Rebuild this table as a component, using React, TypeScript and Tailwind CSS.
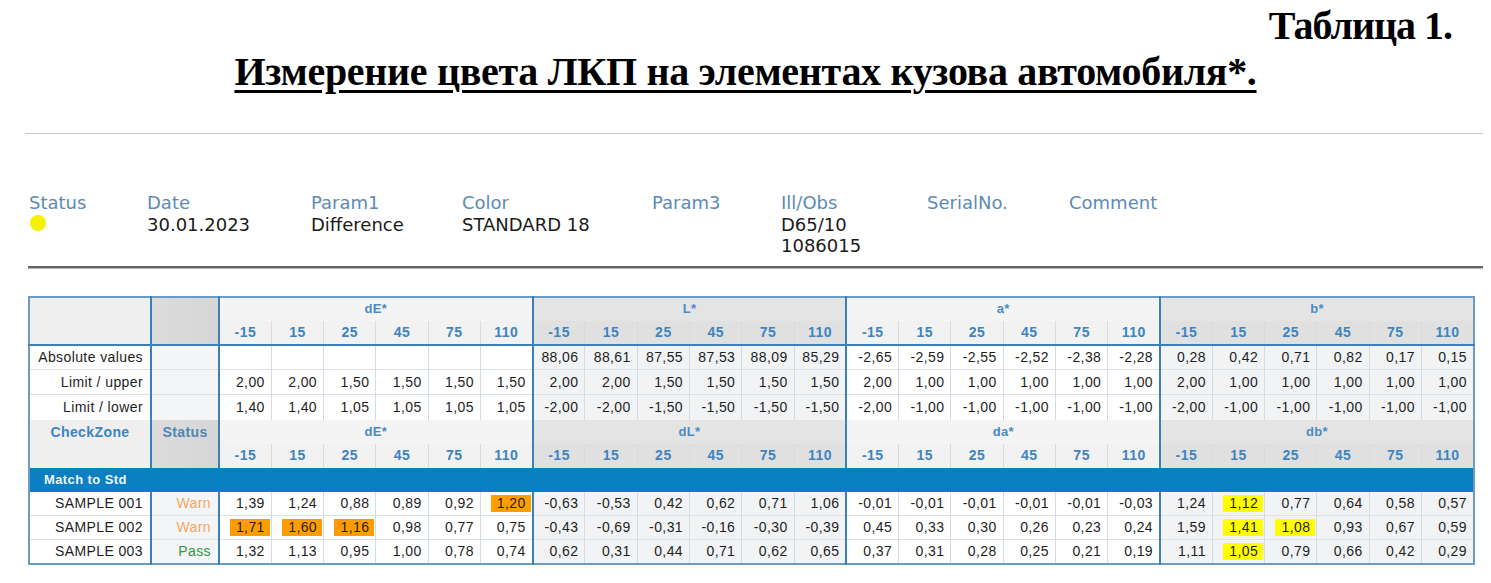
const angles = ["-15", "15", "25", "45", "75", "110"];

const groups = [
  { name: "dE*", diff: "dE*", shade: false },
  { name: "L*", diff: "dL*", shade: true },
  { name: "a*", diff: "da*", shade: false },
  { name: "b*", diff: "db*", shade: true },
];

const refRows: { label: string; values: string[] }[] = [
  {
    label: "Absolute values",
    values: [
      "", "", "", "", "", "",
      "88,06", "88,61", "87,55", "87,53", "88,09", "85,29",
      "-2,65", "-2,59", "-2,55", "-2,52", "-2,38", "-2,28",
      "0,28", "0,42", "0,71", "0,82", "0,17", "0,15",
    ],
  },
  {
    label: "Limit / upper",
    values: [
      "2,00", "2,00", "1,50", "1,50", "1,50", "1,50",
      "2,00", "2,00", "1,50", "1,50", "1,50", "1,50",
      "2,00", "1,00", "1,00", "1,00", "1,00", "1,00",
      "2,00", "1,00", "1,00", "1,00", "1,00", "1,00",
    ],
  },
  {
    label: "Limit / lower",
    values: [
      "1,40", "1,40", "1,05", "1,05", "1,05", "1,05",
      "-2,00", "-2,00", "-1,50", "-1,50", "-1,50", "-1,50",
      "-2,00", "-1,00", "-1,00", "-1,00", "-1,00", "-1,00",
      "-2,00", "-1,00", "-1,00", "-1,00", "-1,00", "-1,00",
    ],
  },
];

// "o:" = orange warning, "y:" = yellow warning
const samples: { name: string; status: string; values: string[] }[] = [
  {
    name: "SAMPLE 001",
    status: "Warn",
    values: [
      "1,39", "1,24", "0,88", "0,89", "0,92", "o:1,20",
      "-0,63", "-0,53", "0,42", "0,62", "0,71", "1,06",
      "-0,01", "-0,01", "-0,01", "-0,01", "-0,01", "-0,03",
      "1,24", "y:1,12", "0,77", "0,64", "0,58", "0,57",
    ],
  },
  {
    name: "SAMPLE 002",
    status: "Warn",
    values: [
      "o:1,71", "o:1,60", "o:1,16", "0,98", "0,77", "0,75",
      "-0,43", "-0,69", "-0,31", "-0,16", "-0,30", "-0,39",
      "0,45", "0,33", "0,30", "0,26", "0,23", "0,24",
      "1,59", "y:1,41", "y:1,08", "0,93", "0,67", "0,59",
    ],
  },
  {
    name: "SAMPLE 003",
    status: "Pass",
    values: [
      "1,32", "1,13", "0,95", "1,00", "0,78", "0,74",
      "0,62", "0,31", "0,44", "0,71", "0,62", "0,65",
      "0,37", "0,31", "0,28", "0,25", "0,21", "0,19",
      "1,11", "y:1,05", "0,79", "0,66", "0,42", "0,29",
    ],
  },
];

const info = [
  { label: "Status", w: "w-[118px]", dot: true, lines: [] as string[] },
  { label: "Date", w: "w-[164px]", lines: ["30.01.2023"] },
  { label: "Param1", w: "w-[151px]", lines: ["Difference"] },
  { label: "Color", w: "w-[190px]", lines: ["STANDARD 18"] },
  { label: "Param3", w: "w-[129px]", lines: [] },
  { label: "Ill/Obs", w: "w-[146px]", lines: ["D65/10", "1086015"] },
  { label: "SerialNo.", w: "w-[142px]", lines: [] },
  { label: "Comment", w: "w-[120px]", lines: [] },
];

function sideBorder(i: number) {
  return i % 6 === 0
    ? "border-l-2 border-l-[#3b80b9]"
    : "border-l border-l-[#d3dce5]";
}

function HeaderRows({ first, second, useDiff }: { first: string; second: string; useDiff: boolean }) {
  return (
    <>
      <tr className="h-[24px]">
        <td
          rowSpan={2}
          className="bg-[#efefef] border-r-2 border-r-[#3b80b9] align-top pt-[2px] text-center font-bold text-[14px] text-[#3d84c0]"
        >
          {first}
        </td>
        <td
          rowSpan={2}
          className="bg-gradient-to-r from-[#dcdcdc] to-[#d6d6d6] align-top pt-[2px] text-center font-bold text-[14px] text-[#4f86b4]"
        >
          {second}
        </td>
        {groups.map((g) => (
          <td
            key={g.name}
            colSpan={6}
            className={`border-l-2 border-l-[#3b80b9] text-center font-bold text-[13px] tracking-[0.3px] text-[#4a8ac4] ${
              g.shade ? "bg-[#e4e4e4]" : "bg-[#f4f4f4]"
            }`}
          >
            {useDiff ? g.diff : g.name}
          </td>
        ))}
      </tr>
      <tr className="h-[24px]">
        {groups.map((g) =>
          angles.map((a, j) => (
            <td
              key={g.name + a}
              className={`${sideBorder(j)} ${
                j % 6 !== 0 ? "border-l-[#d2d2d2]" : ""
              } text-center font-bold text-[14px] tracking-[0.5px] text-[#3d84c0] ${
                g.shade ? "bg-[#e0e0e0]" : "bg-[#f2f2f2]"
              }`}
            >
              {a}
            </td>
          ))
        )}
      </tr>
    </>
  );
}

function Value({ v }: { v: string }) {
  if (v.startsWith("o:") || v.startsWith("y:")) {
    const bg = v.startsWith("o:") ? "bg-[#ff9d00]" : "bg-[#ffff00]";
    return (
      <span className={`inline-block w-[40px] pr-[5px] text-right leading-[17px] ${bg}`}>
        {v.slice(2)}
      </span>
    );
  }
  return <span className="inline-block pr-[5px]">{v}</span>;
}

function DataCells({ values }: { values: string[] }) {
  return (
    <>
      {values.map((v, i) => {
        const shade = groups[Math.floor(i / 6)].shade;
        return (
          <td
            key={i}
            className={`${sideBorder(i)} pr-[1px] text-right ${shade ? "bg-[#f1f3f5]" : "bg-white"}`}
          >
            <Value v={v} />
          </td>
        );
      })}
    </>
  );
}

export default function App() {
  return (
    <div className="w-[1491px] h-[583px] overflow-hidden bg-white flex flex-col">
      <div className="pt-[6px] pr-[39px] text-right font-['Liberation_Serif',serif] font-bold text-[40px] leading-none tracking-[-1px] text-black">
        Таблица 1.
      </div>
      <div className="mt-[6px] text-center font-['Liberation_Serif',serif] font-bold text-[40px] leading-none tracking-[-0.3px] text-black">
        <span className="underline decoration-[3px] underline-offset-[5px]">
          Измерение цвета ЛКП на элементах кузова автомобиля*.
        </span>
      </div>

      <div className="mt-[41px] ml-[25px] w-[1458px] h-px bg-[#c6c6c6]" />

      <div className="mt-[58px] ml-[29px] flex font-['DejaVu_Sans',sans-serif] text-[18px] leading-[21.5px]">
        {info.map((c) => (
          <div key={c.label} className={c.w}>
            <div className="text-[#5e8ab3]">{c.label}</div>
            {c.dot && <div className="mt-[1px] ml-px w-4 h-4 rounded-full bg-[#f5f200]" />}
            {c.lines.map((l) => (
              <div key={l} className="text-[#1a1a1a]">
                {l}
              </div>
            ))}
          </div>
        ))}
      </div>

      <div className="mt-[9px] ml-[28px] w-[1455px]">
        <div className="h-[2px] bg-[#666666]" />
        <div className="h-px bg-[#b4b4b4]" />
      </div>

      <div className="mt-[27px] ml-[28px]">
        <table className="table-fixed border-collapse w-[1447px] border-2 border-[#6c9cc4] font-['Liberation_Sans',Arial,sans-serif] text-[14px] tracking-[0.4px] text-[#1e1e1e]">
          <colgroup>
            <col className="w-[122px]" />
            <col className="w-[68px]" />
            {Array.from({ length: 24 }).map((_, i) => (
              <col key={i} />
            ))}
          </colgroup>
          <tbody>
            <HeaderRows first="" second="" useDiff={false} />
            {refRows.map((r, ri) => (
              <tr
                key={r.label}
                className={`h-[25px] ${ri === 0 ? "border-t-2 border-t-[#3b80b9]" : "border-t border-t-[#dae2e9]"}`}
              >
                <td className="border-r-2 border-r-[#3b80b9] bg-white text-right pr-[7px]">{r.label}</td>
                <td className="bg-[#f3f5f7]" />
                <DataCells values={r.values} />
              </tr>
            ))}
            <HeaderRows first="CheckZone" second="Status" useDiff={true} />
            <tr className="h-[24px]">
              <td
                colSpan={26}
                className="bg-[#0a7fc1] text-[#eef6fb] font-bold text-[13px] pl-[14px]"
              >
                Match to Std
              </td>
            </tr>
            {samples.map((s, si) => (
              <tr
                key={s.name}
                className={`h-[24px] ${si === 0 ? "" : "border-t border-t-[#dae2e9]"}`}
              >
                <td className="border-r-2 border-r-[#3b80b9] bg-white text-right pr-[7px]">{s.name}</td>
                <td
                  className={`bg-[#f3f5f7] text-right pr-[7px] ${
                    s.status === "Pass" ? "text-[#2b9a3c]" : "text-[#f6a75e]"
                  }`}
                >
                  {s.status}
                </td>
                <DataCells values={s.values} />
              </tr>
            ))}
          </tbody>
        </table>
      </div>
    </div>
  );
}
